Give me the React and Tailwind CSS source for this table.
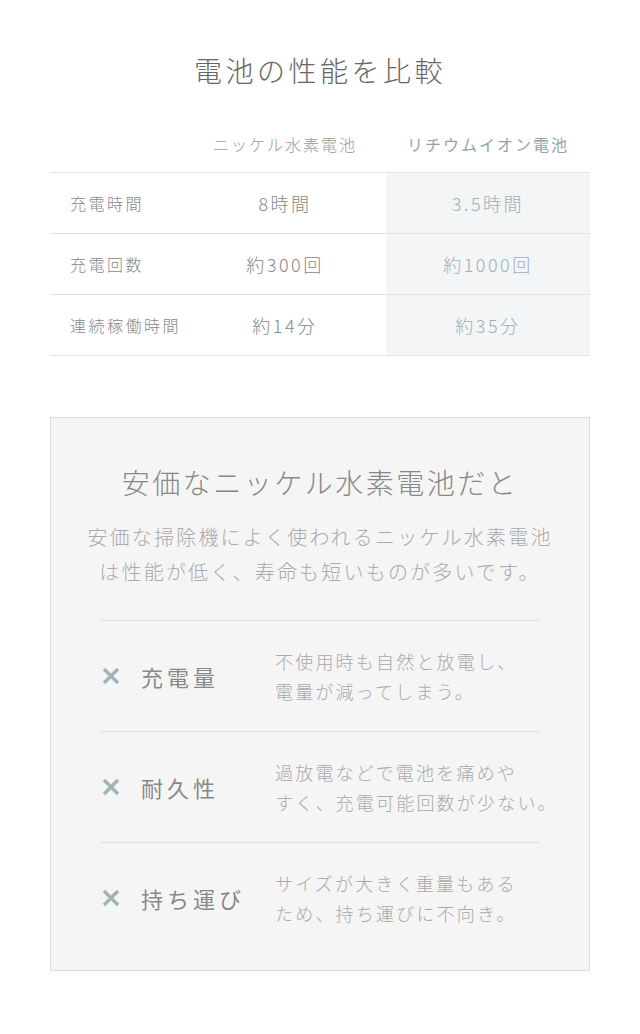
import React from 'react';

const rows = [
  { label: '充電時間', nimh: '8時間', li: '3.5時間' },
  { label: '充電回数', nimh: '約300回', li: '約1000回' },
  { label: '連続稼働時間', nimh: '約14分', li: '約35分' },
];

const cons = [
  { title: '充電量', lines: ['不使用時も自然と放電し、', '電量が減ってしまう。'] },
  { title: '耐久性', lines: ['過放電などで電池を痛めや', 'すく、充電可能回数が少ない。'] },
  { title: '持ち運び', lines: ['サイズが大きく重量もある', 'ため、持ち運びに不向き。'] },
];

const Cross = () => (
  <svg width="20" height="20" viewBox="0 0 20 20" className="shrink-0">
    <path d="M3 3L17 17M17 3L3 17" stroke="#9fb4b8" strokeWidth="3.4" strokeLinecap="butt" />
  </svg>
);

export default function App() {
  return (
    <div
      className="w-[640px] min-h-[1034px] bg-white pt-[50px] pb-[63px]"
      style={{ fontFamily: '"Noto Sans CJK JP", "Noto Sans", sans-serif' }}
    >
      <h1 className="text-center text-[28px] leading-[40px] tracking-[3.5px] text-[#666] font-light">
        電池の性能を比較
      </h1>

      <div className="mx-[50px] mt-[26px]">
        <div className="grid grid-cols-[134px_202px_204px] h-[56px] items-center">
          <div />
          <div className="text-center text-[16px] tracking-[2px] text-[#999] font-light">ニッケル水素電池</div>
          <div className="text-center text-[16px] tracking-[2px] text-[#8fa7ac]">リチウムイオン電池</div>
        </div>
        <div className="border-t border-[#e3e3e3]">
          {rows.map((r) => (
            <div key={r.label} className="grid grid-cols-[134px_202px_204px] h-[61px] border-b border-[#e3e3e3]">
              <div className="flex items-center pl-[20px] text-[16px] tracking-[2.5px] text-[#888] font-light">{r.label}</div>
              <div className="flex items-center justify-center text-[18px] tracking-[2.5px] text-[#888] font-light">{r.nimh}</div>
              <div className="flex items-center justify-center bg-[#f3f5f6] text-[18px] tracking-[2.5px] text-[#9eb0b5] font-light">{r.li}</div>
            </div>
          ))}
        </div>
      </div>

      <div className="mx-[50px] mt-[61px] border border-[#dcdcdc] bg-[#f5f5f5] pt-[44px] pb-[17px]">
        <h2 className="text-center text-[28px] leading-[40px] tracking-[2.5px] text-[#888] font-light">
          安価なニッケル水素電池だと
        </h2>
        <p className="mt-[17px] text-center text-[20px] leading-[35px] tracking-[2.2px] text-[#aaa] font-light">
          安価な掃除機によく使われるニッケル水素電池
          <br />
          は性能が低く、寿命も短いものが多いです。
        </p>
        <div className="mx-[50px] mt-[31px]">
          {cons.map((c) => (
            <div key={c.title} className="flex items-center h-[111px] border-t border-[#dddddd]">
              <Cross />
              <div className="w-[154px] shrink-0 pl-[20px] text-[22px] tracking-[4px] text-[#888]">{c.title}</div>
              <div className="shrink-0 text-[18px] leading-[30px] tracking-[2.2px] text-[#aaa] font-light whitespace-nowrap">
                {c.lines.map((l) => (
                  <div key={l}>{l}</div>
                ))}
              </div>
            </div>
          ))}
        </div>
      </div>
    </div>
  );
}
